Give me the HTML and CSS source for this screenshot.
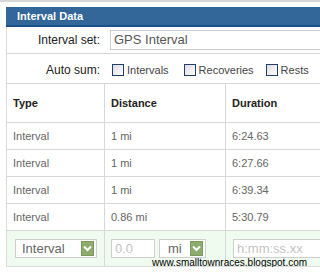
FILE: index.html
```html
<!DOCTYPE html>
<html lang="en">
<head>
  <meta charset="UTF-8">
  <title>Interval Data</title>
  <link rel="stylesheet" href="styles.css">
</head>
<body>
  <div class="topline"></div>

  <div class="panel">
    <div class="panel-head">Interval Data</div>

    <div class="form-row set-row">
      <label class="form-label">Interval set:</label>
      <div class="text-box set-box">GPS Interval</div>
    </div>

    <div class="form-row sum-row">
      <label class="form-label">Auto sum:</label>
      <div class="checks">
        <span class="check"><span class="cb"></span>Intervals</span>
        <span class="check"><span class="cb"></span>Recoveries</span>
        <span class="check"><span class="cb"></span>Rests</span>
      </div>
    </div>

    <table class="intervals">
      <thead>
        <tr>
          <th class="c-type">Type</th>
          <th class="c-dist">Distance</th>
          <th class="c-dur">Duration</th>
        </tr>
      </thead>
      <tbody>
        <tr><td>Interval</td><td>1 mi</td><td>6:24.63</td></tr>
        <tr><td>Interval</td><td>1 mi</td><td>6:27.66</td></tr>
        <tr><td>Interval</td><td>1 mi</td><td>6:39.34</td></tr>
        <tr><td>Interval</td><td>0.86 mi</td><td>5:30.79</td></tr>
        <tr class="new-row">
          <td>
            <div class="select type-select">
              <span>Interval</span>
              <span class="arrow"><svg width="9" height="7" viewBox="0 0 9 7"><path d="M1 1.5 L4.5 5 L8 1.5" fill="none" stroke="#fff" stroke-width="2"/></svg></span>
            </div>
          </td>
          <td>
            <div class="dist-cell">
              <div class="text-box dist-box">0.0</div>
              <div class="select unit-select">
                <span>mi</span>
                <span class="arrow"><svg width="9" height="7" viewBox="0 0 9 7"><path d="M1 1.5 L4.5 5 L8 1.5" fill="none" stroke="#fff" stroke-width="2"/></svg></span>
              </div>
            </div>
          </td>
          <td><div class="text-box dur-box">h:mm:ss.xx</div></td>
        </tr>
      </tbody>
    </table>
  </div>

  <div class="watermark">www.smalltownraces.blogspot.com</div>
</body>
</html>
```

FILE: styles.css
```css
* {
  box-sizing: border-box;
}
body {
  margin: 0;
  font-family: "Liberation Sans", Arial, sans-serif;
  background: #fff;
  color: #333;
  position: relative;
}
.topline {
  height: 2px;
  background: #d6d6d6;
  margin-bottom: 5px;
}
.panel {
  margin-left: 6px;
  width: 314px;
  overflow: hidden;
}
.panel-head {
  background: #336699;
  border-bottom: 2px solid #1d4f88;
  color: #fff;
  font-weight: bold;
  font-size: 11px;
  height: 20px;
  line-height: 18px;
  padding-left: 11px;
}
.form-row {
  display: flex;
  align-items: center;
  border-left: 1px solid #dcdcdc;
  border-bottom: 1px solid #d8d8d8;
}
.set-row {
  height: 27px;
}
.sum-row {
  height: 30px;
  padding-top: 2px;
}
.form-label {
  flex: none;
  width: 97px;
  text-align: right;
  padding-right: 4px;
  font-size: 12px;
  color: #222;
}
.text-box {
  background: #fff;
  border: 1px solid #cfcfcf;
  height: 19px;
  line-height: 17px;
  font-size: 13px;
  padding-left: 3px;
}
.set-box {
  flex: none;
  margin-left: 6px;
  width: 240px;
  color: #555;
  height: 20px;
  line-height: 18px;
}
.checks {
  display: flex;
  margin-left: 8px;
  font-size: 11px;
  color: #444;
}
.check {
  display: flex;
  align-items: center;
  margin-right: 15px;
}
.check:nth-child(2) {
  margin-right: 12px;
}
.cb {
  width: 12px;
  height: 12px;
  border: 1px solid #1f3f66;
  background: linear-gradient(135deg, #dcdce4, #fff);
  margin-right: 3px;
}
.intervals {
  table-layout: fixed;
  width: 360px;
  border-collapse: collapse;
  font-size: 11px;
  border-left: 1px solid #dcdcdc;
}
.intervals th,
.intervals td {
  text-align: left;
  padding: 0 0 0 6px;
  border-bottom: 1px solid #d8d8d8;
  border-right: 1px solid #d8d8d8;
}
.intervals th {
  height: 38px;
  font-weight: bold;
  color: #222;
}
.intervals td {
  height: 27px;
  color: #666;
}
.c-type {
  width: 98px;
}
.c-dist {
  width: 121px;
}
.c-dur {
  width: 141px;
}
.intervals .new-row td {
  background: #effbef;
  height: 36px;
  border-bottom: 1px solid #dcdcdc;
}
.select {
  display: flex;
  align-items: center;
  justify-content: space-between;
  background: #fff;
  border: 1px solid #cfcfcf;
  height: 19px;
  font-size: 13px;
  color: #666;
  padding: 0 2px 0 6px;
}
.type-select {
  width: 82px;
  margin-left: 2px;
}
.arrow {
  display: flex;
  align-items: center;
  justify-content: center;
  width: 13px;
  height: 15px;
  background: #8dab6e;
  border: 1px solid #7a9a5c;
}
.dist-cell {
  display: flex;
  gap: 4px;
}
.dist-box {
  width: 44px;
  color: #c4c4c4;
}
.unit-select {
  width: 47px;
  padding-left: 8px;
}
.dur-box {
  margin-left: 1px;
  color: #c4c4c4;
  width: 120px;
}
.watermark {
  position: absolute;
  left: 152px;
  top: 257px;
  font-size: 10px;
  color: #000;
}
```
